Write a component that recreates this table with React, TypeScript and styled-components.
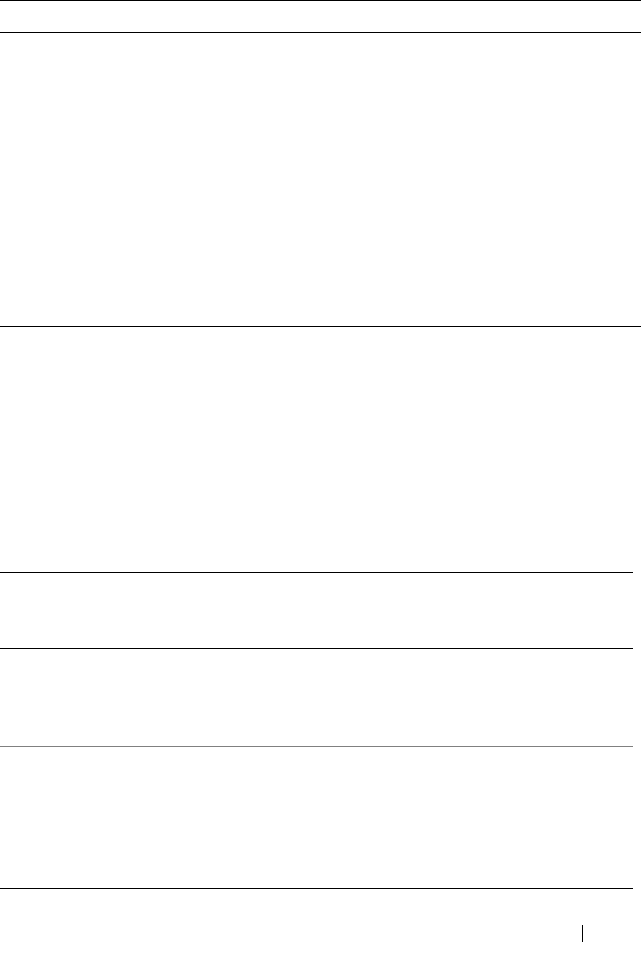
import styled, { createGlobalStyle } from "styled-components";

const GlobalStyle = createGlobalStyle`
    html, body {
        margin: 0;
        padding: 0;
        background: #ffffff;
        font-family: "Liberation Sans", Arial, sans-serif;
    }
`;

const Page = styled.div`
    width: 641px;
    height: 955px;

    display: flex;
    flex-direction: column;

    background: #ffffff;
    overflow: hidden;
`;

const Table = styled.div<{ $width: number }>`
    width: ${(p) => p.$width}px;

    display: flex;
    flex-direction: column;
`;

const Row = styled.div<{ $height: number; $rule?: string; $top?: boolean }>`
    height: ${(p) => p.$height}px;

    border-top: ${(p) => (p.$top ? "1px solid #000" : "none")};
    border-bottom: 1px solid ${(p) => p.$rule ?? "#000"};

    box-sizing: border-box;
`;

const Footer = styled.div`
    display: flex;
    justify-content: flex-end;

    padding: 36px 58px 0 0;
`;

const FooterRule = styled.div`
    width: 1px;
    height: 17px;

    background: #000;
`;

export default function App() {
    return (
        <>
            <GlobalStyle />

            <Page>

                <Table $width={641}>
                    <Row $height={33} $top />
                    <Row $height={294} />
                </Table>

                <Table $width={633}>
                    <Row $height={246} />
                    <Row $height={76} />
                    <Row $height={98} $rule="#808080" />
                    <Row $height={142} />
                </Table>

                <Footer>
                    <FooterRule />
                </Footer>

            </Page>
        </>
    );
}
